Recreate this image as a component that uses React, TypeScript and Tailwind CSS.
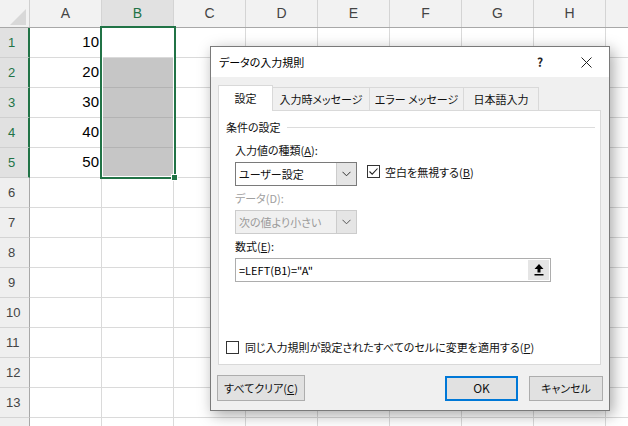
const cols = ['A', 'B', 'C', 'D', 'E', 'F', 'G', 'H', ''];
const rows = [1, 2, 3, 4, 5, 6, 7, 8, 9, 10, 11, 12, 13, 0];

const jp = "[font-family:'Noto_Sans_CJK_JP',sans-serif] [font-feature-settings:'palt']";

function Chevron({ color = '#333' }: { color?: string }) {
  return (
    <svg width="9" height="6" viewBox="0 0 9 6">
      <path d="M0.5 0.8 L4.5 4.8 L8.5 0.8" fill="none" stroke={color} strokeWidth="1" />
    </svg>
  );
}

function CheckBox({ checked }: { checked?: boolean }) {
  return (
    <div className="w-[13px] h-[13px] border border-[#333] bg-white flex items-center justify-center shrink-0">
      {checked && (
        <svg width="11" height="11" viewBox="0 0 11 11">
          <path d="M1.5 5.5 L4.2 8.2 L9.5 2.5" fill="none" stroke="#222" strokeWidth="1.1" />
        </svg>
      )}
    </div>
  );
}

function Sheet() {
  return (
    <div className="flex flex-col">
      {/* column headers */}
      <div className="flex h-[28px] border-b border-[#a8a8a8] bg-[#f2f2f2]">
        <div className="w-[30px] shrink-0 border-r border-[#cfcfcf] relative">
          <svg className="absolute left-0 top-0" width="29" height="27" viewBox="0 0 29 27">
            <polygon points="26,9 26,25 10,25" fill="#d8d8d8" />
          </svg>
        </div>
        {cols.map((c, i) => (
          <div
            key={i}
            className={`w-[72px] shrink-0 border-r border-[#d4d4d4] flex items-center justify-center text-[14px] [font-family:'Liberation_Sans',sans-serif] ${
              c === 'B' ? 'bg-[#e1e1e1] text-[#217346]' : 'text-[#444]'
            }`}
          >
            {c}
          </div>
        ))}
      </div>
      {rows.map((r, ri) => {
        const sel = r >= 1 && r <= 5;
        return (
          <div key={ri} className="flex h-[30px]">
            <div
              className={`w-[30px] shrink-0 flex items-center text-[13px] [font-family:'Liberation_Sans',sans-serif] border-b ${
                sel
                  ? 'bg-[#e1e1e1] border-r-2 border-r-[#217346] border-b-[#cfcfcf] text-[#217346]'
                  : 'bg-[#efefef] border-r border-r-[#a8a8a8] border-b-[#d4d4d4] text-[#444]'
              } ${r < 10 ? 'pl-[8px]' : 'pl-[6px]'}`}
            >
              {r > 0 ? r : ''}
            </div>
            {cols.map((c, ci) => {
              const gray = c === 'B' && r >= 2 && r <= 5;
              return (
                <div
                  key={ci}
                  className={`w-[72px] shrink-0 border-r border-b ${
                    gray ? 'bg-[#c6c6c6] border-[#b3b3b3]' : 'bg-white border-[#dadada]'
                  } flex items-end justify-end pr-[2px] pb-[7px] text-[15px] leading-[16px] text-black [font-family:'Liberation_Sans',sans-serif]`}
                >
                  {c === 'A' && sel ? r * 10 : ''}
                </div>
              );
            })}
          </div>
        );
      })}
    </div>
  );
}

function Tab({ label, active, w, first }: { label: string; active?: boolean; w: string; first?: boolean }) {
  return (
    <div
      className={`${w} ${first ? '' : '-ml-px'} border-l border-t border-r border-[#d9d9d9] flex items-center justify-center text-[11px] text-[#111] ${
        active ? 'h-[26px] bg-white z-20' : 'h-[23px] mb-px bg-[#f0f0f0] z-10'
      }`}
    >
      {label}
    </div>
  );
}

function Dialog() {
  return (
    <div
      className={`absolute left-[210px] top-[46px] w-[400px] h-[365px] border border-[#7a7a7a] bg-[#f0f0f0] flex flex-col shadow-[3px_4px_14px_rgba(0,0,0,0.35)] ${jp}`}
    >
      {/* title bar */}
      <div className="h-[30px] bg-white flex items-center shrink-0">
        <div className="flex-1 pl-[8px] text-[11px] text-black">データの入力規則</div>
        <div className="w-[46px] flex justify-center text-[12px] font-semibold text-[#222]">?</div>
        <div className="w-[46px] flex justify-center">
          <svg width="11" height="11" viewBox="0 0 11 11">
            <path d="M0.5 0.5 L10.5 10.5 M10.5 0.5 L0.5 10.5" stroke="#222" strokeWidth="1" />
          </svg>
        </div>
      </div>

      {/* body */}
      <div className="flex-1 flex flex-col pt-[8px] pl-[7px] pr-[8px]">
        <div className="flex items-end h-[26px] relative">
          <Tab label="設定" active w="w-[55px]" first />
          <Tab label="入力時メッセージ" w="w-[98px]" />
          <Tab label="エラー メッセージ" w="w-[95px]" />
          <Tab label="日本語入力" w="w-[76px]" />
        </div>
        <div className="-mt-px h-[255px] bg-white border border-[#d9d9d9] flex flex-col pl-[7px] pr-[5px] pt-[8px] pb-[9px] text-[11px] leading-[16px] text-[#111]">
          <div className="flex items-center gap-[6px]">
            <span>条件の設定</span>
            <div className="flex-1 h-px bg-[#dcdcdc]" />
          </div>
          <div className="pl-[9px] flex flex-col">
            <div className="mt-[7px]">
              入力値の種類(<span className="underline">A</span>):
            </div>
            <div className="mt-[4px] flex items-center">
              <div className="w-[122px] h-[24px] border border-[#7a7a7a] bg-white flex">
                <div className="flex-1 flex items-center pl-[3px]">ユーザー設定</div>
                <div className="w-[20px] bg-[#e5e5e5] border-l border-[#cccccc] flex items-center justify-center">
                  <Chevron />
                </div>
              </div>
              <div className="ml-[10px] flex items-center gap-[5px] -mt-[5px]">
                <CheckBox checked />
                <span>
                  空白を無視する(<span className="underline">B</span>)
                </span>
              </div>
            </div>
            <div className="mt-[4px] text-[#a0a0a0]">データ(D):</div>
            <div className="mt-[4px] w-[122px] h-[24px] border border-[#cccccc] bg-[#f0f0f0] flex">
              <div className="flex-1 flex items-center pl-[3px] text-[#9a9a9a]">次の値より小さい</div>
              <div className="w-[20px] bg-[#e5e5e5] border-l border-[#cccccc] flex items-center justify-center">
                <Chevron color="#555" />
              </div>
            </div>
            <div className="mt-[4px]">
              数式(<span className="underline">E</span>):
            </div>
            <div className="mt-[4px] w-[316px] h-[24px] border border-[#adadad] bg-white flex">
              <div className="flex-1 flex items-center pl-[3px] text-black">=LEFT(B1)=&quot;A&quot;</div>
              <div className="w-[21px] my-px mr-px bg-[#e5e5e5] flex items-center justify-center">
                <svg width="10" height="12" viewBox="0 0 10 12">
                  <polygon points="5,0 9.5,5 6.5,5 6.5,8.5 3.5,8.5 3.5,5 0.5,5" fill="#000" />
                  <rect x="0.5" y="10" width="9" height="1.5" fill="#000" />
                </svg>
              </div>
            </div>
          </div>
          <div className="mt-auto flex items-center gap-[6px]">
            <CheckBox />
            <span>
              同じ入力規則が設定されたすべてのセルに変更を適用する(<span className="underline">P</span>)
            </span>
          </div>
        </div>

        {/* buttons */}
        <div className="mt-[10px] flex items-center h-[26px] -ml-px -mr-[2px] text-[11px] text-[#111]">
          <div className="w-[88px] h-[26px] bg-[#e1e1e1] border border-[#adadad] flex items-center justify-center">
            すべてクリア(<span className="underline">C</span>)
          </div>
          <div className="flex-1" />
          <div className="w-[73px] h-[25px] bg-[#e1e1e1] border-2 border-[#0078d7] flex items-center justify-center text-[12px]">
            OK
          </div>
          <div className="ml-[11px] w-[74px] h-[25px] bg-[#e1e1e1] border border-[#adadad] flex items-center justify-center">
            キャンセル
          </div>
        </div>
      </div>
    </div>
  );
}

export default function App() {
  return (
    <div className="w-[628px] h-[426px] overflow-hidden relative bg-white">
      <Sheet />
      {/* selection border B1:B5 */}
      <div className="absolute left-[100px] top-[26px] w-[76px] h-[153px] border-2 border-[#217346] shadow-[inset_0_0_0_1px_#ffffff]" />
      <div className="absolute left-[171px] top-[174px] w-[7px] h-[7px] bg-[#217346] border border-white" />
      <Dialog />
    </div>
  );
}
